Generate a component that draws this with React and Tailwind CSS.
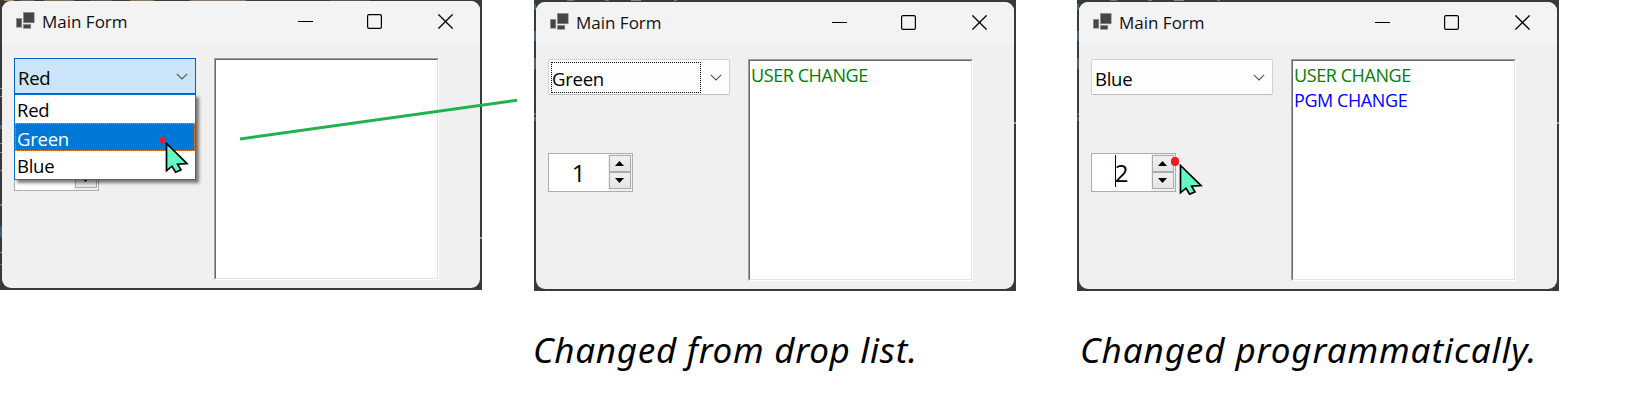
import React from "react";

function FormIcon() {
  return (
    <svg className="block h-[18px] w-[19px] shrink-0" viewBox="0 0 19 18">
      <g fill="#454545" stroke="#8f8f8f" strokeWidth="0.6">
        <rect x="7.4" y="0.4" width="10.8" height="10.4" />
        <rect x="0.4" y="6.4" width="5.4" height="8.8" />
        <rect x="7.4" y="12.4" width="7.4" height="3.9" />
      </g>
    </svg>
  );
}

function TitleBar() {
  return (
    <div className="flex h-[43px] shrink-0 items-start bg-[#f3f3f3] pr-[27px] pl-[14px]">
      <div className="pt-[11px]">
        <FormIcon />
      </div>
      <div className="pt-px pl-[7px] text-[17px] leading-[40px] whitespace-nowrap text-[#111]">Main Form</div>
      <div className="ml-auto flex pt-[13px]">
        <svg className="block h-[15px] w-[15px]" viewBox="0 0 15 15">
          <rect x="0" y="7" width="15" height="1" fill="#000" />
        </svg>
        <svg className="ml-[54px] block h-[15px] w-[15px]" viewBox="0 0 15 15">
          <rect x="0.6" y="0.6" width="13.8" height="13.8" rx="1.4" fill="none" stroke="#000" strokeWidth="1.2" />
        </svg>
        <svg className="ml-[56px] block h-[15px] w-[15px]" viewBox="0 0 15 15">
          <path d="M0.4 0.4 14.6 14.6M14.6 0.4 0.4 14.6" stroke="#000" strokeWidth="1.3" />
        </svg>
      </div>
    </div>
  );
}

function Chevron() {
  return (
    <svg className="absolute top-[14px] right-[7px] block h-[8px] w-[12px]" viewBox="0 0 12 8">
      <path d="M0.8 0.8 6 6 11.2 0.8" fill="none" stroke="#555" strokeWidth="1.1" />
    </svg>
  );
}

function Combo({ value, state }) {
  const look =
    state === "open"
      ? "border-[#0063b9] bg-[#cce4f7]"
      : "rounded-[2px] border-[#d2d2d2] border-b-[#bababa] bg-[#fdfdfd]";
  return (
    <div
      className={
        "relative h-[36px] w-[182px] shrink-0 border pt-[2px] pl-[3px] text-[18.5px] leading-[34px] tracking-[-0.25px] " + look
      }
    >
      {value}
      {state === "focus" && (
        <div className="absolute top-[2px] left-[2px] h-[31px] w-[150px] border border-dotted border-black" />
      )}
      <Chevron />
    </div>
  );
}

function SpinButton({ up }) {
  return (
    <div className="flex h-[17px] items-center border border-[#acacac] bg-linear-to-b from-[#f0f0f0] to-[#e5e5e5] pl-[5px]">
      <svg className="block h-[5px] w-[9px]" viewBox="0 0 9 5">
        <path d={up ? "M0 5 4.5 0 9 5Z" : "M0 0 4.5 5 9 0Z"} fill="#000" />
      </svg>
    </div>
  );
}

function Numeric({ value, caret }) {
  return (
    <div className="flex h-[39px] w-[85px] border border-[#abadb3] bg-white">
      <div className="relative w-[59px] text-center text-[24px] leading-[37px]">
        {value}
        {caret && <div className="absolute top-[1px] left-[23px] h-[32px] w-px bg-black" />}
      </div>
      <div className="flex w-[24px] flex-col bg-[#f0f0f0] p-px">
        <SpinButton up />
        <SpinButton />
      </div>
    </div>
  );
}

function DropList() {
  return (
    <div className="absolute top-[93px] left-[12px] w-[182px] border border-[#0078d7] bg-white text-[18.5px] leading-[26px] tracking-[-0.25px] shadow-[3px_3px_3px_rgba(0,0,0,0.5)]">
      <div className="h-[28px] pt-[2px] pl-[2px]">Red</div>
      <div className="h-[28px] border border-dotted border-[#ff8728] bg-[#0078d7] pt-[2px] pl-px text-white">Green</div>
      <div className="h-[28px] pt-[2px] pl-[2px]">Blue</div>
    </div>
  );
}

function RichText({ children }) {
  return (
    <div className="h-[222px] w-[225px] shrink-0 border border-t-[#a0a0a0] border-r-white border-b-white border-l-[#a0a0a0]">
      <div className="h-full border border-t-[#696969] border-r-[#e3e3e3] border-b-[#e3e3e3] border-l-[#696969] bg-white pt-[2px] pl-px text-[18px] leading-[25px] tracking-[-0.42px]">
        {children}
      </div>
    </div>
  );
}

function Pointer({ className }) {
  return (
    <svg className={"absolute block h-[34px] w-[25px] " + className} viewBox="0 0 25 34">
      <path
        d="M1.5 1.5V28.8L7 24.2 10.6 30.2 16 27.8 12.6 22.2 22 21.6Z"
        fill="#62fbc2"
        stroke="#000"
        strokeWidth="1.7"
        strokeLinejoin="miter"
      />
    </svg>
  );
}

const flecksA = [
  [4, 0, 10, "#a8895c"], [20, 0, 14, "#6e665b"], [44, 0, 30, "#7b6a55"], [90, 0, 22, "#5f5b57"], [130, 0, 24, "#8a7357"],
  [190, 0, 56, "#857768"], [330, 0, 40, "#565656"],
];
const flecksB = [
  [33, 0, 7, "#777"], [71, 0, 4, "#777"], [97, 0, 10, "#888"], [140, 0, 3, "#777"],
];

function Flecks({ marks, sides }) {
  return (
    <svg className="absolute top-0 left-0 block h-[291px] w-[482px]" viewBox="0 0 482 291">
      {marks.map(([x, y, w, c]) => (
        <rect key={x} x={x} y={y} width={w} height="1" fill={c} />
      ))}
      {sides.map(([x, y, h, c]) => (
        <rect key={x + "-" + y} x={x} y={y} width="2" height={h} fill={c} />
      ))}
    </svg>
  );
}

const sidesA = [
  [0, 88, 1, "#888"], [0, 96, 1, "#888"], [0, 125, 4, "#4a6583"], [0, 143, 1, "#888"], [0, 152, 1, "#888"], [0, 170, 1, "#888"],
  [0, 204, 2, "#65798c"], [0, 226, 11, "#3f5a80"], [0, 252, 1, "#888"], [0, 264, 1, "#a26b4a"], [480, 237, 2, "#999"],
];
const sidesB = [
  [0, 4, 6, "#46648a"], [0, 31, 10, "#46648a"], [0, 58, 11, "#46648a"], [0, 113, 2, "#46648a"], [0, 117, 4, "#46648a"],
  [480, 122, 2, "#999"],
];

function Shot({ first, children, overlay }) {
  return (
    <div
      className={
        "relative w-[482px] shrink-0 bg-[#3b3a3a] px-[2px] pb-[2px] " + (first ? "h-[290px] pt-px" : "h-[291px] pt-[2px]")
      }
    >
      <Flecks marks={first ? flecksA : flecksB} sides={first ? sidesA : sidesB} />
      <div className="relative flex h-[287px] flex-col rounded-[9px] bg-[#f0f0f0]">
        <div className="overflow-hidden rounded-t-[9px]">
          <TitleBar />
        </div>
        {children}
        {overlay}
      </div>
    </div>
  );
}

function FormBody({ combo, numeric, log }) {
  return (
    <div className="flex gap-[18px] pt-[14px] pl-[12px]">
      <div className="flex flex-col gap-[58px]">
        {combo}
        {numeric}
      </div>
      <RichText>{log}</RichText>
    </div>
  );
}

const userLine = <div className="text-[#008000]">USER CHANGE</div>;
const pgmLine = <div className="text-[#0000ff]">PGM CHANGE</div>;

export default function App() {
  return (
    <div className="relative flex h-[406px] w-[1645px] items-start overflow-hidden bg-white font-['Open_Sans',sans-serif] text-black">
      <Shot
        first
        overlay={
          <>
            <DropList />
            <svg className="absolute top-[135px] left-[157px] block h-[8px] w-[6px]" viewBox="0 0 6 8">
              <ellipse cx="3.4" cy="4" rx="2.6" ry="3.6" fill="#ed1c24" />
            </svg>
            <Pointer className="top-[141px] left-[163px]" />
          </>
        }
      >
        <FormBody combo={<Combo value="Red" state="open" />} numeric={<Numeric value="" />} log={null} />
      </Shot>

      <div className="ml-[52px] flex w-[482px] shrink-0 flex-col">
        <Shot>
          <FormBody combo={<Combo value="Green" state="focus" />} numeric={<Numeric value="1" />} log={userLine} />
        </Shot>
        <p className="-ml-px pt-[34px] font-['Noto_Sans',sans-serif] text-[35px] leading-[50px] tracking-[0.72px] whitespace-nowrap italic">
          Changed from drop list.
        </p>
      </div>

      <div className="ml-[61px] flex w-[482px] shrink-0 flex-col">
        <Shot
          overlay={
            <>
              <div className="absolute top-[155px] left-[92px] h-[9px] w-[8px] rounded-full bg-[#ed1c24]" />
              <Pointer className="top-[162px] left-[100px]" />
            </>
          }
        >
          <FormBody
            combo={<Combo value="Blue" />}
            numeric={<Numeric value="2" caret />}
            log={
              <>
                {userLine}
                {pgmLine}
              </>
            }
          />
        </Shot>
        <p className="pt-[34px] pl-[3px] font-['Noto_Sans',sans-serif] text-[35px] leading-[50px] tracking-[0.92px] whitespace-nowrap italic">
          Changed programmatically.
        </p>
      </div>

      <svg className="absolute top-[96px] left-[238px] block h-[46px] w-[282px]" viewBox="0 0 282 46">
        <path d="M2 43 279 4.3" stroke="#22b14c" strokeWidth="3" fill="none" />
      </svg>
    </div>
  );
}
